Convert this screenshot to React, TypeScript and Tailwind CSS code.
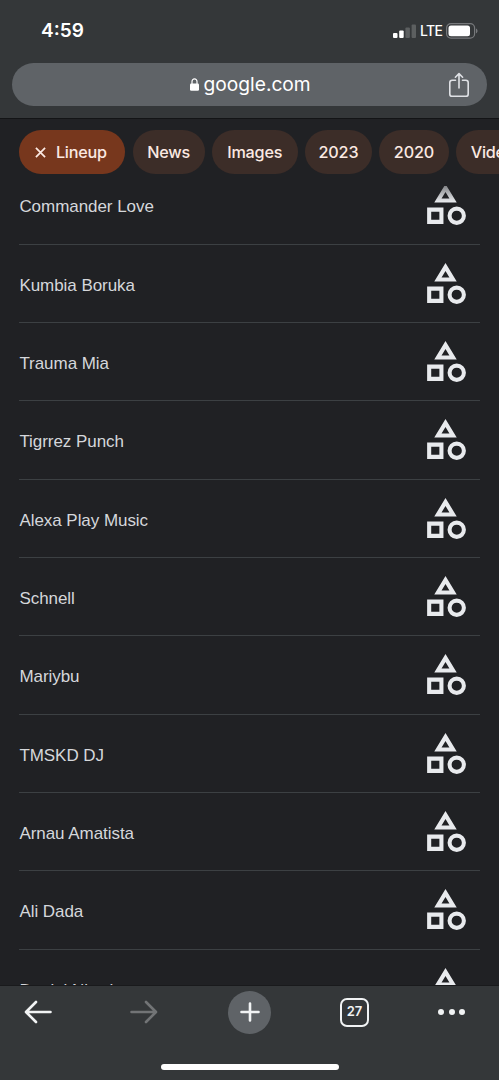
import { clsx } from 'clsx'

interface Chip {
  label: string
  width: string
  active?: boolean
}

const chips: Chip[] = [
  { label: 'Lineup', width: 'w-[106px]', active: true },
  { label: 'News', width: 'w-[72px]' },
  { label: 'Images', width: 'w-[86px]' },
  { label: '2023', width: 'w-[67px]' },
  { label: '2020', width: 'w-[69.5px]' },
  { label: 'Videos', width: 'w-[82px]' },
]

const artists = [
  'Commander Love',
  'Kumbia Boruka',
  'Trauma Mia',
  'Tigrrez Punch',
  'Alexa Play Music',
  'Schnell',
  'Mariybu',
  'TMSKD DJ',
  'Arnau Amatista',
  'Ali Dada',
  'Daniel Nitsch',
]

export default function App() {
  return (
    <div className="flex h-[1080px] w-[499px] flex-col overflow-hidden bg-[#202124] font-['Inter',sans-serif]">
      <header className="h-[118px] shrink-0 bg-[#343739]">
        <StatusBar />
        <AddressBar />
      </header>

      <ChipBar />

      <main className="relative min-h-0 flex-1 overflow-hidden pr-[19px] pl-[19.4px]">
        <ul className="-mt-[19.7px]">
          {artists.map((name) => (
            <ArtistRow key={name} name={name} />
          ))}
        </ul>
        {/* Shadow cast by the sticky chip bar */}
        <div className="absolute inset-x-0 top-0 h-4 bg-linear-to-b from-[#202124]/50 to-transparent" />
      </main>

      <Toolbar />
    </div>
  )
}

const StatusBar = () => (
  <div className="flex h-[63px] items-center justify-between pr-[21px] pl-[41px]">
    <span className="pb-[2px] text-[19px] leading-none font-semibold text-white">4:59</span>
    <div className="flex items-center pb-[2px]">
      <svg className="h-[14px] w-[23px]" viewBox="0 0 23 14" fill="#fff">
        <rect x="0" y="9" width="4.5" height="5" rx="1" />
        <rect x="6.2" y="6.5" width="4.5" height="7.5" rx="1" />
        <rect x="12.4" y="3.5" width="4.5" height="10.5" rx="1" opacity=".2" />
        <rect x="18.6" y="0.5" width="4.4" height="13.5" rx="1" opacity=".2" />
      </svg>
      <span className="ml-[4px] w-[22px] text-[14px] leading-none font-medium tracking-[-0.6px] text-white">
        LTE
      </span>
      <svg className="ml-[4px] h-4 w-8" viewBox="0 0 32 16">
        <rect x=".6" y=".6" width="28" height="14.6" rx="4.4" fill="none" stroke="#77797c" strokeWidth="1.2" />
        <rect x="2.5" y="2.5" width="21.5" height="10.8" rx="2.5" fill="#fff" />
        <path d="M30 5.5c2 .8 2 4 0 4.8z" fill="#77797c" />
      </svg>
    </div>
  </div>
)

const AddressBar = () => (
  <div className="mx-3 flex h-[43px] items-center rounded-full bg-[#5f6367] pr-[17px] pl-[177.5px]">
    <svg className="h-[13px] w-[9px]" viewBox="0 0 9 13">
      <path d="M2 6V3.4a2.5 2.5 0 0 1 5 0V6" fill="none" stroke="#fff" strokeWidth="1.2" />
      <rect x="0" y="5.4" width="9" height="7.4" rx="1.3" fill="#fff" />
    </svg>
    <span className="ml-[5px] text-[19.2px] leading-none text-white">google.com</span>
    <svg
      className="ml-auto h-[26px] w-[22px]"
      viewBox="0 0 22 26"
      fill="none"
      stroke="#dfe1e5"
      strokeWidth="1.6"
      strokeLinecap="round"
      strokeLinejoin="round"
    >
      <path d="M7.5 8.2H4.2a2.4 2.4 0 0 0-2.4 2.4v11.3a2.4 2.4 0 0 0 2.4 2.4h13.6a2.4 2.4 0 0 0 2.4-2.4V10.6a2.4 2.4 0 0 0-2.4-2.4h-3.3" />
      <path d="M11 16V1.8M7.4 5.2 11 1.6l3.6 3.6" />
    </svg>
  </div>
)

const ChipBar = () => (
  <nav className="flex h-[68px] shrink-0 gap-[7.2px] overflow-hidden border-t border-[#131416] bg-[#202124] pt-[11px] pl-[19.4px]">
    {chips.map(({ label, width, active }) => (
      <button
        key={label}
        className={clsx(
          'flex h-[44px] shrink-0 items-center justify-center rounded-full text-[16.2px] font-medium tracking-[-0.2px] text-[#fbe9e2]',
          width,
          active ? 'bg-[#77371d] pr-[3px]' : 'bg-[#3c2d28]',
        )}
      >
        {active && (
          <svg className="mr-[10px] h-[11px] w-[11px]" viewBox="0 0 12 12" stroke="currentColor" strokeWidth="1.9">
            <path d="M1 1l10 10M11 1 1 11" />
          </svg>
        )}
        {label}
      </button>
    ))}
  </nav>
)

const ArtistRow = ({ name }: { name: string }) => (
  <li className="flex h-[78.33px] items-center justify-between border-b border-[#3c4043] pr-[10px]">
    <span className="pt-[4px] font-['Liberation_Sans',Arial,sans-serif] text-[17px] tracking-[-0.05px] text-[#d5d7db]">
      {name}
    </span>
    <CategoryIcon />
  </li>
)

const CategoryIcon = () => (
  <svg className="h-[49px] w-[49px]" viewBox="0 0 24 24" fill="#e8eaed">
    <path d="M12 2l-5.5 9h11L12 2zm0 3.84L13.93 9h-3.87L12 5.84zM17.5 13a4.5 4.5 0 1 0 0 9 4.5 4.5 0 0 0 0-9zm0 7a2.5 2.5 0 1 1 0-5 2.5 2.5 0 0 1 0 5zM3 21.5h8v-8H3v8zm2-6h4v4H5v-4z" />
  </svg>
)

const Toolbar = () => (
  <footer className="flex h-[95px] shrink-0 flex-col items-center border-t border-[#191a1c] bg-[#343739]">
    <div className="flex h-[52px] w-full items-center pl-6">
      <Arrow className="text-[#f1f3f4]" />
      <Arrow className="ml-[78px] rotate-180 text-[#727476]" />
      <div className="ml-[70px] flex h-[43px] w-[43px] items-center justify-center rounded-full bg-[#5f6367]">
        <svg className="h-5 w-5" viewBox="0 0 20 20" stroke="#f1f3f4" strokeWidth="2.6" strokeLinecap="round">
          <path d="M10 1.5v17M1.5 10h17" />
        </svg>
      </div>
      <div className="ml-[69px] flex h-[29px] w-[29px] items-center justify-center rounded-[7px] border-2 border-[#f1f3f4] text-[13px] font-semibold text-[#f1f3f4]">
        27
      </div>
      <div className="ml-[69px] flex gap-[4.5px]">
        <span className="h-1.5 w-1.5 rounded-full bg-[#f1f3f4]" />
        <span className="h-1.5 w-1.5 rounded-full bg-[#f1f3f4]" />
        <span className="h-1.5 w-1.5 rounded-full bg-[#f1f3f4]" />
      </div>
    </div>
    {/* Home indicator */}
    <div className="mt-[26px] h-1.5 w-[178px] rounded-full bg-white" />
  </footer>
)

const Arrow = ({ className }: { className: string }) => (
  <svg
    className={clsx('h-[24px] w-[28px]', className)}
    viewBox="0 0 28 24"
    fill="none"
    stroke="currentColor"
    strokeWidth="2.6"
    strokeLinecap="round"
    strokeLinejoin="round"
  >
    <path d="M12 2 2 12l10 10M2.5 12h24" />
  </svg>
)
